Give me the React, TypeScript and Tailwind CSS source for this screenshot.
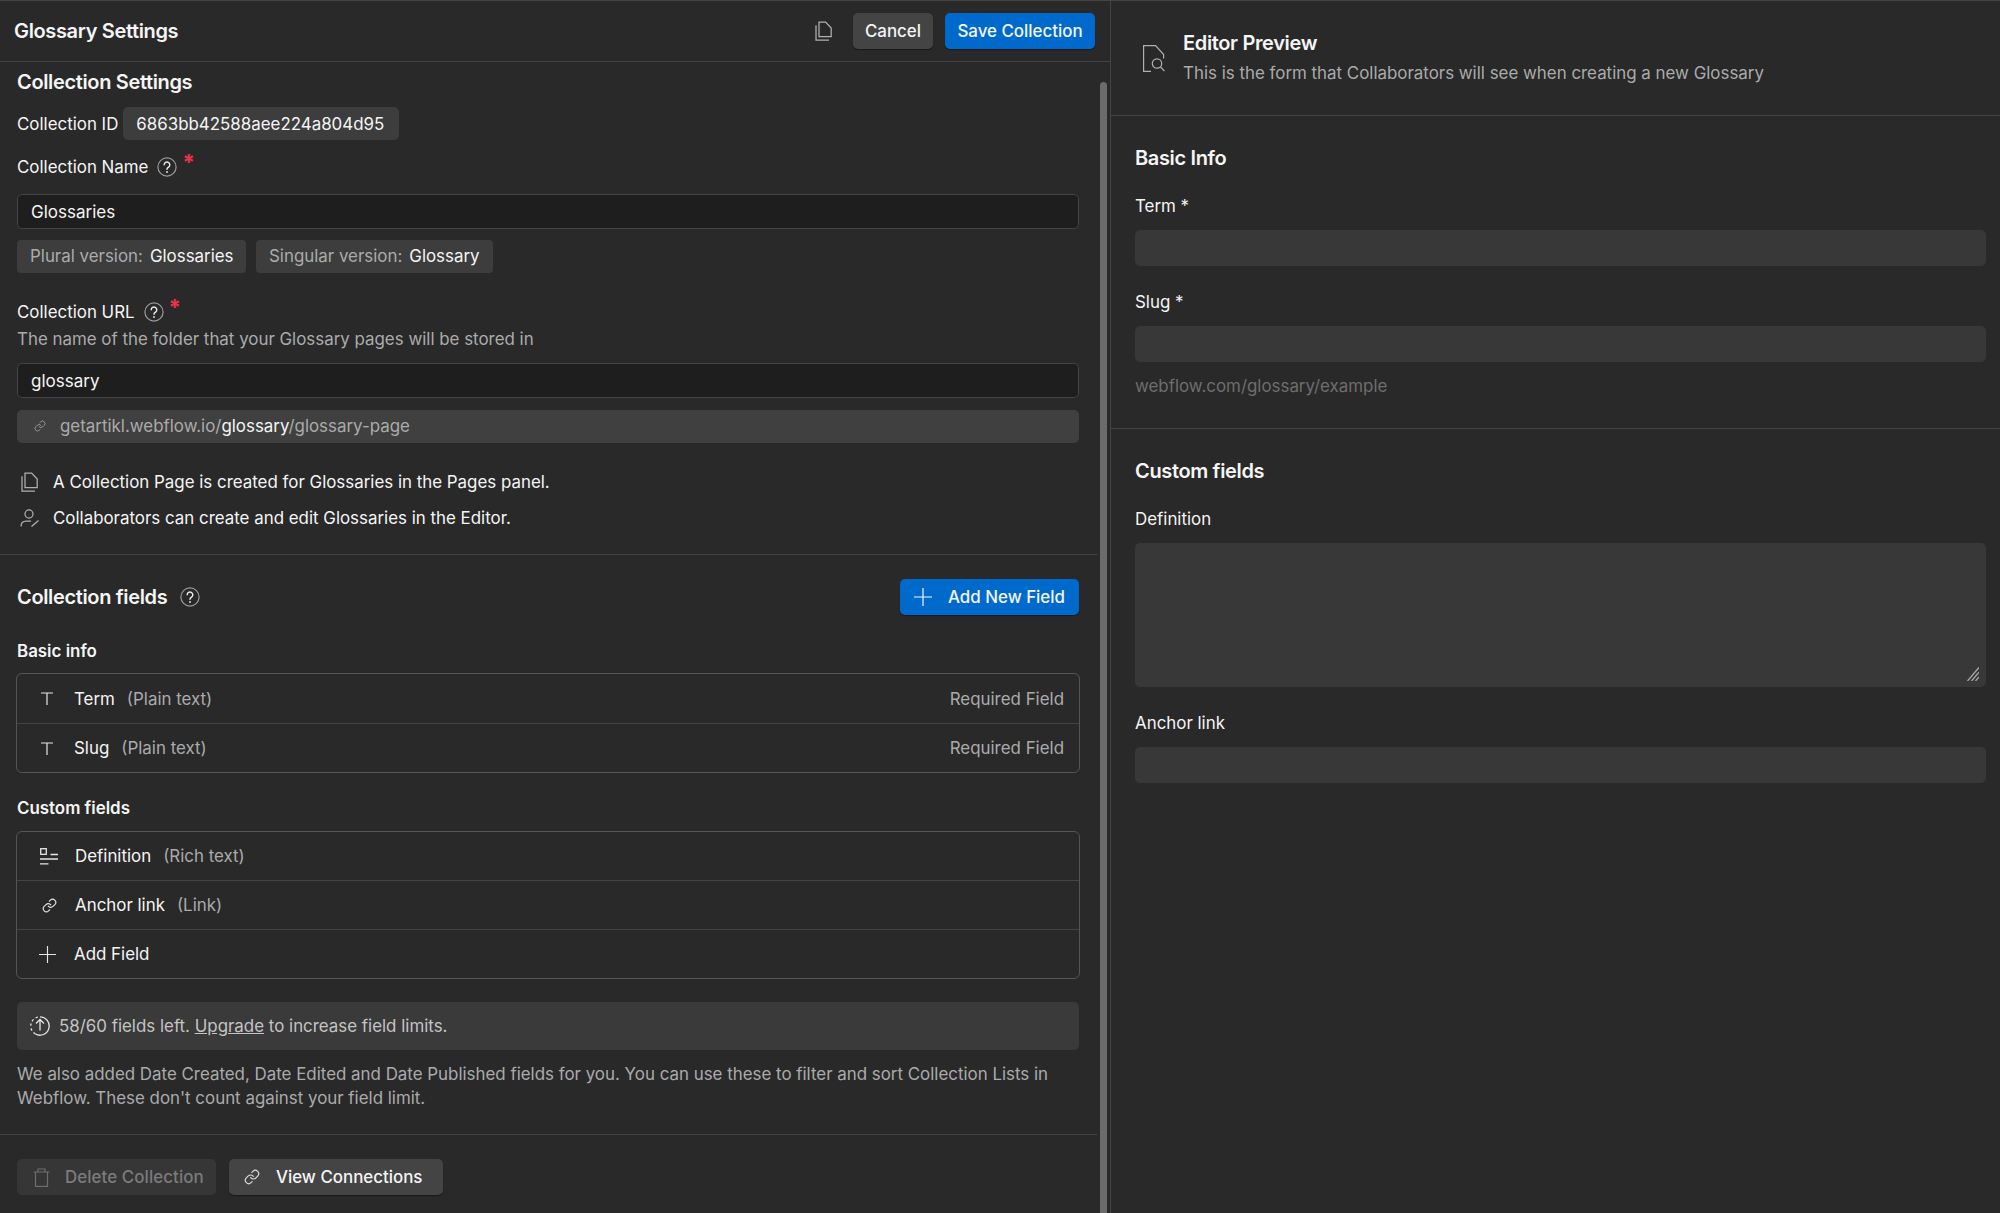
import React from "react";
import { Link } from "lucide-react";

const Pages = ({ className = "" }: { className?: string }) => (
  <svg viewBox="0 0 17 20" fill="none" stroke="currentColor" strokeWidth="1.25" className={className}>
    <path d="M4 1.1h6.6l5.6 6v8.6H4z" />
    <path d="M1 4.2v15h13" />
  </svg>
);

const Help = ({ className = "" }: { className?: string }) => (
  <svg viewBox="0 0 20 20" fill="none" strokeLinecap="round" className={`h-[20px] w-[20px] ${className}`}>
    <circle cx="10" cy="10" r="9.1" stroke="#9a9a9a" strokeWidth="1.2" />
    <path d="M7.2 7.8a2.8 2.8 0 1 1 4.4 2.3c-1 .7-1.6 1.1-1.6 2.2" stroke="#eeeeee" strokeWidth="1.4" />
    <path d="M10 15v.1" stroke="#eeeeee" strokeWidth="1.8" />
  </svg>
);

const PlusIcon = ({ className = "" }: { className?: string }) => (
  <svg viewBox="0 0 18 18" fill="none" stroke="currentColor" strokeWidth="1.2" className={className}>
    <path d="M9 0v18M0 9h18" />
  </svg>
);

const Req = () => <span className="ml-[5px] -mt-[11px] text-[22px] leading-[20px] font-bold text-[#f0304a]">*</span>;

const TIcon = () => (
  <svg viewBox="0 0 12 13" fill="none" stroke="currentColor" strokeWidth="1.2" className="h-[13px] w-[12px] text-[#e6e6e6]">
    <path d="M0 1h12M6 1v12" />
  </svg>
);

const Row = ({ icon, name, kind, right, last, h, box = "w-[57px] pl-[3px]" }: { icon: React.ReactNode; name: string; kind?: string; right?: string; last?: boolean; h: string; box?: string }) => (
  <div className={`flex items-center ${h} ${last ? "" : "border-b border-[#444444]"}`}>
    <div className={`flex items-center justify-center ${box}`}>{icon}</div>
    <span className="text-[#f5f5f5]">{name}</span>
    {kind && <span className="ml-[12px] text-[#ababab]">{kind}</span>}
    {right && <span className="ml-auto mr-[15px] text-[#ababab]">{right}</span>}
  </div>
);

const Pill = ({ label, value, w }: { label: string; value: string; w: string }) => (
  <div className={`flex h-[33px] ${w} items-center rounded-[4px] bg-[#3d3d3d] pb-px pl-[13px]`}>
    <span className="text-[#ababab]">{label}</span>
    <span className="ml-[7px] text-[#f5f5f5]">{value}</span>
  </div>
);

const Field = ({ value }: { value: string }) => (
  <input
    readOnly
    value={value}
    className="block h-[35px] w-full rounded-[5px] border border-[#444444] bg-[#1e1e1e] pl-[13px] text-[17px] text-[#f5f5f5] outline-none"
  />
);

const PreviewLabel = ({ children, className = "" }: { children: React.ReactNode; className?: string }) => (
  <div className={`h-[24px] leading-[24px] text-[#f5f5f5] ${className}`}>{children}</div>
);

const PreviewInput = ({ className = "" }: { className?: string }) => (
  <input readOnly className={`block h-[36px] w-full rounded-[5px] bg-[#383838] outline-none ${className}`} />
);

const titleCls = "text-[20px] font-semibold tracking-[-0.35px]";

export default function App() {
  return (
    <div className="flex h-screen w-full overflow-hidden border-t border-[#444444] bg-[#292929] font-['Inter',sans-serif] text-[16.9px] leading-[24px] text-[#f5f5f5]">
      <div className="flex w-[1110px] shrink-0 flex-col">
        <header className="flex h-[61px] shrink-0 items-center border-b border-[#444444] pl-[14px] pr-[15px]">
          <h1 className={titleCls}>Glossary Settings</h1>
          <Pages className="ml-auto h-[20px] w-[17px] text-[#b0b0b0]" />
          <button className="ml-[21px] h-[36px] w-[80px] rounded-[5px] bg-[#444444] text-center font-medium shadow-[0_1px_1px_rgba(0,0,0,0.4)]">Cancel</button>
          <button className="ml-[12px] h-[36px] w-[150px] rounded-[5px] bg-[#006acc] text-center font-medium shadow-[0_1px_1px_rgba(0,0,0,0.4)]">Save Collection</button>
        </header>

        <div className="flex min-h-0 flex-1">
          <main className="w-[1097px] shrink-0">
            <section className="border-b border-[#444444] pb-[24px] pl-[17px] pr-[18px]">
              <h2 className={`flex h-[40px] items-center ${titleCls}`}>Collection Settings</h2>
              <div className="mt-[5px] flex h-[33px] items-center">
                <span>Collection ID</span>
                <span className="ml-[5px] flex h-[33px] w-[276px] items-center rounded-[5px] bg-[#3d3d3d] pl-[13px]">6863bb42588aee224a804d95</span>
              </div>
              <div className="mt-[15px] flex h-[24px] items-center">
                <span>Collection Name</span>
                <Help className="ml-[9px]" />
                <Req />
              </div>
              <div className="mt-[15px]"><Field value="Glossaries" /></div>
              <div className="mt-[11px] flex gap-[10px]">
                <Pill label="Plural version:" value="Glossaries" w="w-[229px]" />
                <Pill label="Singular version:" value="Glossary" w="w-[237px]" />
              </div>
              <div className="mt-[27px] flex h-[24px] items-center">
                <span>Collection URL</span>
                <Help className="ml-[9px]" />
                <Req />
              </div>
              <p className="mt-[3px] text-[#ababab]">The name of the folder that your Glossary pages will be stored in</p>
              <div className="mt-[12px]"><Field value="glossary" /></div>
              <div className="mt-[12px] flex h-[33px] items-center rounded-[5px] bg-[#404040] pb-px pl-[17px] text-[#ababab]">
                <Link size={12} strokeWidth={1.7} className="text-[#a0a0a0]" />
                <span className="ml-[14px]">getartikl.webflow.io/<span className="text-[#f5f5f5]">glossary</span>/glossary-page</span>
              </div>
              <div className="mt-[27px] flex h-[24px] items-center">
                <Pages className="ml-[4px] h-[20px] w-[17px] text-[#b0b0b0]" />
                <span className="ml-[15px]">A Collection Page is created for Glossaries in the Pages panel.</span>
              </div>
              <div className="mt-[12px] flex h-[24px] items-center">
                <svg viewBox="0 0 20 18" fill="none" stroke="currentColor" strokeWidth="1.25" className="ml-[3px] h-[18px] w-[20px] text-[#b0b0b0]">
                  <circle cx="9" cy="5" r="4" />
                  <path d="M1 17.5c0-3.400 2-5.500 5-5.500h5M11.500 17.500l7-6" />
                </svg>
                <span className="ml-[13px]">Collaborators can create and edit Glossaries in the Editor.</span>
              </div>
            </section>

            <section className="border-b border-[#444444] pb-[24px] pl-[17px] pr-[18px] pt-[24px]">
              <div className="flex h-[36px] items-center">
                <h2 className={titleCls}>Collection fields</h2>
                <Help className="ml-[13px]" />
                <button className="ml-auto flex h-[36px] w-[179px] items-center rounded-[5px] bg-[#006acc] pl-[14px] font-medium shadow-[0_1px_1px_rgba(0,0,0,0.4)]">
                  <PlusIcon className="h-[18px] w-[18px]" />
                  <span className="ml-[16px]">Add New Field</span>
                </button>
              </div>
              <h3 className="mt-[24px] h-[24px] font-semibold">Basic info</h3>
              <div className="-mx-px mt-[10px] rounded-[6px] border border-[#555555]">
                <Row h="h-[50px]" icon={<TIcon />} name="Term" kind="(Plain text)" right="Required Field" />
                <Row h="h-[48px]" icon={<TIcon />} name="Slug" kind="(Plain text)" right="Required Field" last />
              </div>
              <h3 className="mt-[23px] h-[24px] font-semibold">Custom fields</h3>
              <div className="-mx-px mt-[11px] rounded-[6px] border border-[#555555]">
                <Row
                  h="h-[49px]"
                  box="w-[58px] pl-[6px]"
                  name="Definition"
                  kind="(Rich text)"
                  icon={
                    <svg viewBox="0 0 18 17" fill="none" stroke="currentColor" strokeWidth="1.3" className="h-[17px] w-[18px] text-[#e6e6e6]">
                      <rect x="0.7" y="0.7" width="5.600" height="5.600" />
                      <path d="M10.500 6.500H18M0 11H18M0 15.800H8.500" />
                    </svg>
                  }
                />
                <Row h="h-[49px]" box="w-[58px] pl-[6px]" name="Anchor link" kind="(Link)" icon={<Link size={15} strokeWidth={1.8} className="text-[#e6e6e6]" />} />
                <Row h="h-[48px]" name="Add Field" icon={<PlusIcon className="h-[17px] w-[17px] text-[#e6e6e6]" />} last />
              </div>
              <div className="mt-[23px] flex h-[48px] items-center rounded-[5px] bg-[#3a3a3a] pl-[13px] text-[#c4c4c4]">
                <svg viewBox="0 0 20 20" fill="none" stroke="currentColor" strokeWidth="1.3" className="h-[20px] w-[20px] text-[#e6e6e6]">
                  <path d="M10 .8a9.200 9.200 0 1 1-4.600 17.200" />
                  <path d="M5.400 18A9.200 9.200 0 0 1 10 .8" strokeDasharray="2.400 2.400" />
                  <path d="M10 14.500V3.500M6 7.500 10 3.500 14 7.500" />
                </svg>
                <span className="ml-[9px]">58/60 fields left. <span className="underline">Upgrade</span> to increase field limits.</span>
              </div>
              <p className="mt-[12px] text-[#ababab]">We also added Date Created, Date Edited and Date Published fields for you. You can use these to filter and sort Collection Lists in Webflow. These don't count against your field limit.</p>
            </section>

            <footer className="flex gap-[13px] pl-[17px] pt-[24px]">
              <button className="flex h-[36px] w-[199px] items-center rounded-[5px] bg-[#363636] pl-[16px] font-medium text-[#7c7c7c]">
                <svg viewBox="0 0 17 19" fill="none" stroke="currentColor" strokeWidth="1.2" className="h-[19px] w-[17px] text-[#6e6e6e]">
                  <path d="M.5 4h16M5 4V1h7v3M2.500 4v14.300h12V4" />
                </svg>
                <span className="ml-[15px] tracking-[0.08px]">Delete Collection</span>
              </button>
              <button className="flex h-[36px] w-[214px] items-center rounded-[5px] bg-[#444444] pl-[15px] font-medium shadow-[0_1px_1px_rgba(0,0,0,0.4)]">
                <Link size={16} strokeWidth={1.7} className="text-[#e0e0e0]" />
                <span className="ml-[16px]">View Connections</span>
              </button>
            </footer>
          </main>
          <div className="flex-1 pl-[3px] pr-[3px] pt-[20px]">
            <div className="h-full rounded-t-[4px] bg-[#6b6b6b]" />
          </div>
        </div>
      </div>

      <aside className="flex-1 border-l border-[#444444]">
        <div className="flex h-[115px] items-center border-b border-[#444444] pl-[32px]">
          <svg viewBox="0 0 22 27" fill="none" stroke="currentColor" strokeWidth="1.2" className="h-[27px] w-[22px] text-[#b0b0b0]">
            <path d="M8 26.400H.6V.6h12l8 9v4" />
            <circle cx="14" cy="18.500" r="4.700" />
            <path d="m17.500 22 4 4.200" />
          </svg>
          <div className="ml-[18px]">
            <h2 className={titleCls}>Editor Preview</h2>
            <p className="mt-[6px] text-[#ababab]">This is the form that Collaborators will see when creating a new Glossary</p>
          </div>
        </div>
        <section className="border-b border-[#444444] pb-[30px] pl-[24px] pr-[14px] pt-[30px]">
          <h3 className={`h-[24px] ${titleCls}`}>Basic Info</h3>
          <PreviewLabel className="mt-[24px]">Term *</PreviewLabel>
          <PreviewInput className="mt-[12px]" />
          <PreviewLabel className="mt-[24px]">Slug *</PreviewLabel>
          <PreviewInput className="mt-[12px]" />
          <p className="mt-[12px] text-[#6e6e6e]">webflow.com/glossary/example</p>
        </section>
        <section className="pl-[24px] pr-[14px] pt-[30px]">
          <h3 className={`h-[24px] ${titleCls}`}>Custom fields</h3>
          <PreviewLabel className="mt-[24px]">Definition</PreviewLabel>
          <div className="relative mt-[12px]">
            <textarea readOnly className="block h-[144px] w-full resize-none rounded-[5px] bg-[#383838] outline-none" />
            <svg viewBox="0 0 12 14" fill="none" stroke="#a8a8a8" strokeWidth="1.300" className="absolute bottom-[6px] right-[7px] h-[14px] w-[12px]">
              <path d="M.5 14 12 .5M4.500 14 12 5.200M8.500 14 12 9.900" />
            </svg>
          </div>
          <PreviewLabel className="mt-[24px]">Anchor link</PreviewLabel>
          <PreviewInput className="mt-[12px]" />
        </section>
      </aside>
    </div>
  );
}
